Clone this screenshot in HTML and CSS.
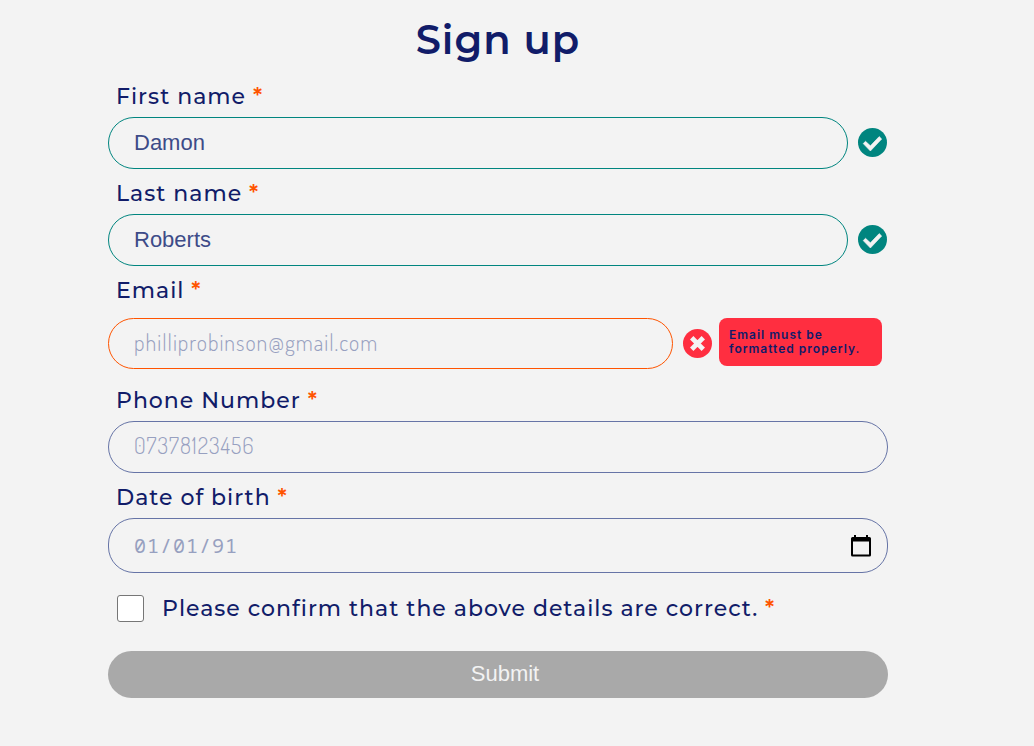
FILE: index.html
```html
<!DOCTYPE html>
<html lang="en">
<head>
<meta charset="utf-8">
<meta name="viewport" content="width=device-width, initial-scale=1">
<title>Sign up</title>
<link rel="stylesheet" href="styles.css">
</head>
<body class="page">
<main class="signup">
  <h1 class="title">Sign up</h1>
  <form class="form">
    <div class="field">
      <label class="label" for="first">First name <span class="required">*</span></label>
      <div class="row">
        <input class="control valid" id="first" type="text" value="Damon">
        <svg class="status" viewBox="0 0 30 30" aria-hidden="true"><circle cx="14.500" cy="14.500" r="14.500" fill="#00857f"/><path d="M5.200 15.600l2.300-2.300 4.900 4.500 8.800-9.200 2.500 2.400-11.300 12z" fill="#f3f3f3" stroke="#f3f3f3" stroke-width="0.600" stroke-linejoin="round"/></svg>
      </div>
    </div>
    <div class="field">
      <label class="label" for="last">Last name <span class="required">*</span></label>
      <div class="row">
        <input class="control valid" id="last" type="text" value="Roberts">
        <svg class="status" viewBox="0 0 30 30" aria-hidden="true"><circle cx="14.500" cy="14.500" r="14.500" fill="#00857f"/><path d="M5.200 15.600l2.300-2.300 4.900 4.500 8.800-9.200 2.500 2.400-11.300 12z" fill="#f3f3f3" stroke="#f3f3f3" stroke-width="0.600" stroke-linejoin="round"/></svg>
      </div>
    </div>
    <div class="field">
      <label class="label" for="email">Email <span class="required">*</span></label>
      <div class="row row-error">
        <input class="control invalid" id="email" type="email" placeholder="philliprobinson@gmail.com" aria-describedby="email-error">
        <svg class="status" viewBox="0 0 30 30" aria-hidden="true"><circle cx="14.500" cy="14.500" r="14.500" fill="#ff2e40"/><path d="M10.400 10.400l8.200 8.200M18.600 10.400l-8.200 8.200" fill="none" stroke="#f3f3f3" stroke-width="4.800" stroke-linecap="square"/></svg>
        <p class="error" id="email-error">Email must be formatted properly.</p>
      </div>
    </div>
    <div class="field">
      <label class="label" for="phone">Phone Number <span class="required">*</span></label>
      <div class="row">
        <input class="control" id="phone" type="tel" placeholder="07378123456">
      </div>
    </div>
    <div class="field">
      <label class="label" for="birth">Date of birth <span class="required">*</span></label>
      <div class="control date">
        <input class="date-input" id="birth" type="text" placeholder="01/01/91">
        <button class="picker" type="button" aria-label="Choose date"><svg class="calendar" viewBox="0 0 20 22" aria-hidden="true"><path fill="#000" fill-rule="evenodd" d="M3 0h2v2h10V0h2v2h1.500a1.500 1.500 0 0 1 1.500 1.500v16.500a1.500 1.500 0 0 1-1.500 1.500h-17A1.500 1.500 0 0 1 0 20V3.500A1.500 1.500 0 0 1 1.500 2H3zM2 6.500v13h16v-13z"/></svg></button>
      </div>
    </div>
    <div class="confirm">
      <input class="checkbox" id="confirm" type="checkbox">
      <label class="confirm-label" for="confirm">Please confirm that the above details are correct. <span class="required">*</span></label>
    </div>
    <button class="submit" type="submit">Submit</button>
  </form>
</main>
</body>
</html>
```
FILE: styles.css
```css
* { box-sizing: border-box; }

.page {
  margin: 0;
  background: #f3f3f3;
  color: #111c69;
  font-family: Montserrat, Inter, sans-serif;
}

.signup { padding: 8px 146px 48px 108px; }

.title {
  margin: 0;
  font-size: 40px;
  line-height: 64px;
  font-weight: 600;
  letter-spacing: 1px;
  text-align: center;
}

.form, .field { display: flex; flex-direction: column; }

.label {
  padding: 5px 8px 0;
  font-size: 22px;
  line-height: 40px;
  font-weight: 500;
  letter-spacing: 1px;
}

.required { color: #ff5400; font-weight: 600; }

.row { display: flex; align-items: center; gap: 10px; }
.row-error { margin: 7px 0; padding-right: 6px; }

.control {
  flex: 1;
  min-width: 0;
  height: 52px;
  padding: 0 25px;
  border: 1px solid #6674a6;
  border-radius: 26px;
  background: transparent;
  color: #3d4b88;
  font-family: "Liberation Sans", Arial, sans-serif;
  font-size: 22px;
}

.control::placeholder {
  color: #97a0c0;
  font-family: Dosis, Lato, sans-serif;
  font-weight: 300;
  letter-spacing: 1px;
  opacity: 1;
}

.valid { border-color: #00857f; }
.invalid { height: 51px; border-color: #ff5400; }

.status { flex: none; width: 30px; height: 30px; }

.error {
  align-self: flex-start;
  width: 163px;
  margin: 0 0 0 -4px;
  padding: 10px;
  border-radius: 8px;
  background: #ff2e40;
  font-family: Inter, sans-serif;
  font-size: 12px;
  line-height: 14px;
  font-weight: 600;
  letter-spacing: 1px;
}

.date {
  display: flex;
  flex: none;
  align-items: center;
  height: 55px;
  padding-right: 16px;
}

.date-input {
  flex: 1;
  min-width: 0;
  padding: 0;
  border: 0;
  background: transparent;
  color: #3d4b88;
  font-family: "Noto Sans Mono", "Noto Sans", monospace;
  font-size: 20px;
  letter-spacing: 1px;
}

.date-input::placeholder { color: #97a0c0; opacity: 1; }

.picker { display: flex; padding: 0; border: 0; background: transparent; }
.calendar { width: 20px; height: 22px; }

.confirm {
  display: flex;
  align-items: center;
  gap: 18px;
  margin: 22px 0 29px;
  padding-left: 9px;
}

.checkbox {
  flex: none;
  width: 27px;
  height: 27px;
  margin: 0;
  border: 1px solid #767676;
  border-radius: 3px;
  background: #fff;
  appearance: none;
}

.checkbox:checked { background: #111c69; }

.confirm-label {
  font-size: 22px;
  line-height: 27px;
  font-weight: 500;
  letter-spacing: 1px;
}

.submit {
  height: 47px;
  padding: 0 0 2px 14px;
  border: 0;
  border-radius: 24px;
  background: #a9a9a9;
  color: #f3f3f3;
  font-family: "Liberation Sans", Arial, sans-serif;
  font-size: 22px;
}
```
